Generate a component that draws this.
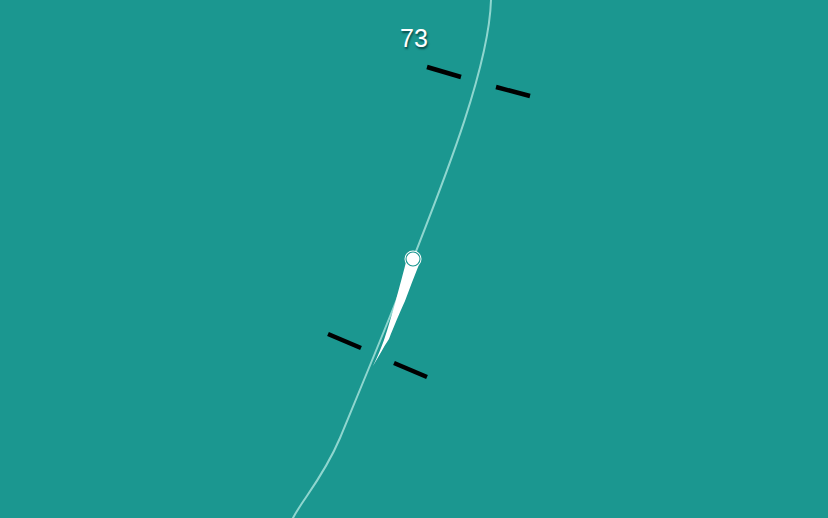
const CURVE =
  "M491,-10 L491,0 C489,70 440,190 413,259 C389,320 364,380 340,438 C323,478 302,500 293,518 L287,530"

const BARS = [
  [427, 67, 461, 77],
  [496, 87, 530, 96],
  [328, 334, 361, 348],
  [394, 363, 427, 377],
]

export default function App() {
  return (
    <div className="relative w-[828px] h-[518px] overflow-hidden bg-[#1b9790]">
      <svg width="828" height="518" viewBox="0 0 828 518" className="block">
        <path d={CURVE} fill="none" stroke="#8fd6cf" strokeWidth="2" />
        {BARS.map(([x1, y1, x2, y2], i) => (
          <line key={i} x1={x1} y1={y1} x2={x2} y2={y2} stroke="#000" strokeWidth="4.5" />
        ))}
        {/* trail */}
        <path
          d="M406,262 C402,278 398,292 396,300 C392,314 388,328 384,340 C381,348 378,356 373,366 C379,356 383,348 389,339 C394,326 400,312 405,301 C409,290 414,277 420,262 Z"
          fill="#fff"
        />
        <circle cx="413" cy="259" r="8.5" fill="#fff" />
        <circle cx="413" cy="259" r="7" fill="none" stroke="#1b9790" strokeWidth="1.1" />
      </svg>
      <div className="absolute left-[384px] top-[23px] w-[60px] text-center text-white text-[25px] leading-[30px] [font-family:'Liberation_Sans',Arial,sans-serif] [text-shadow:1px_2px_2px_rgba(0,40,40,0.7)]">
        73
      </div>
    </div>
  )
}
